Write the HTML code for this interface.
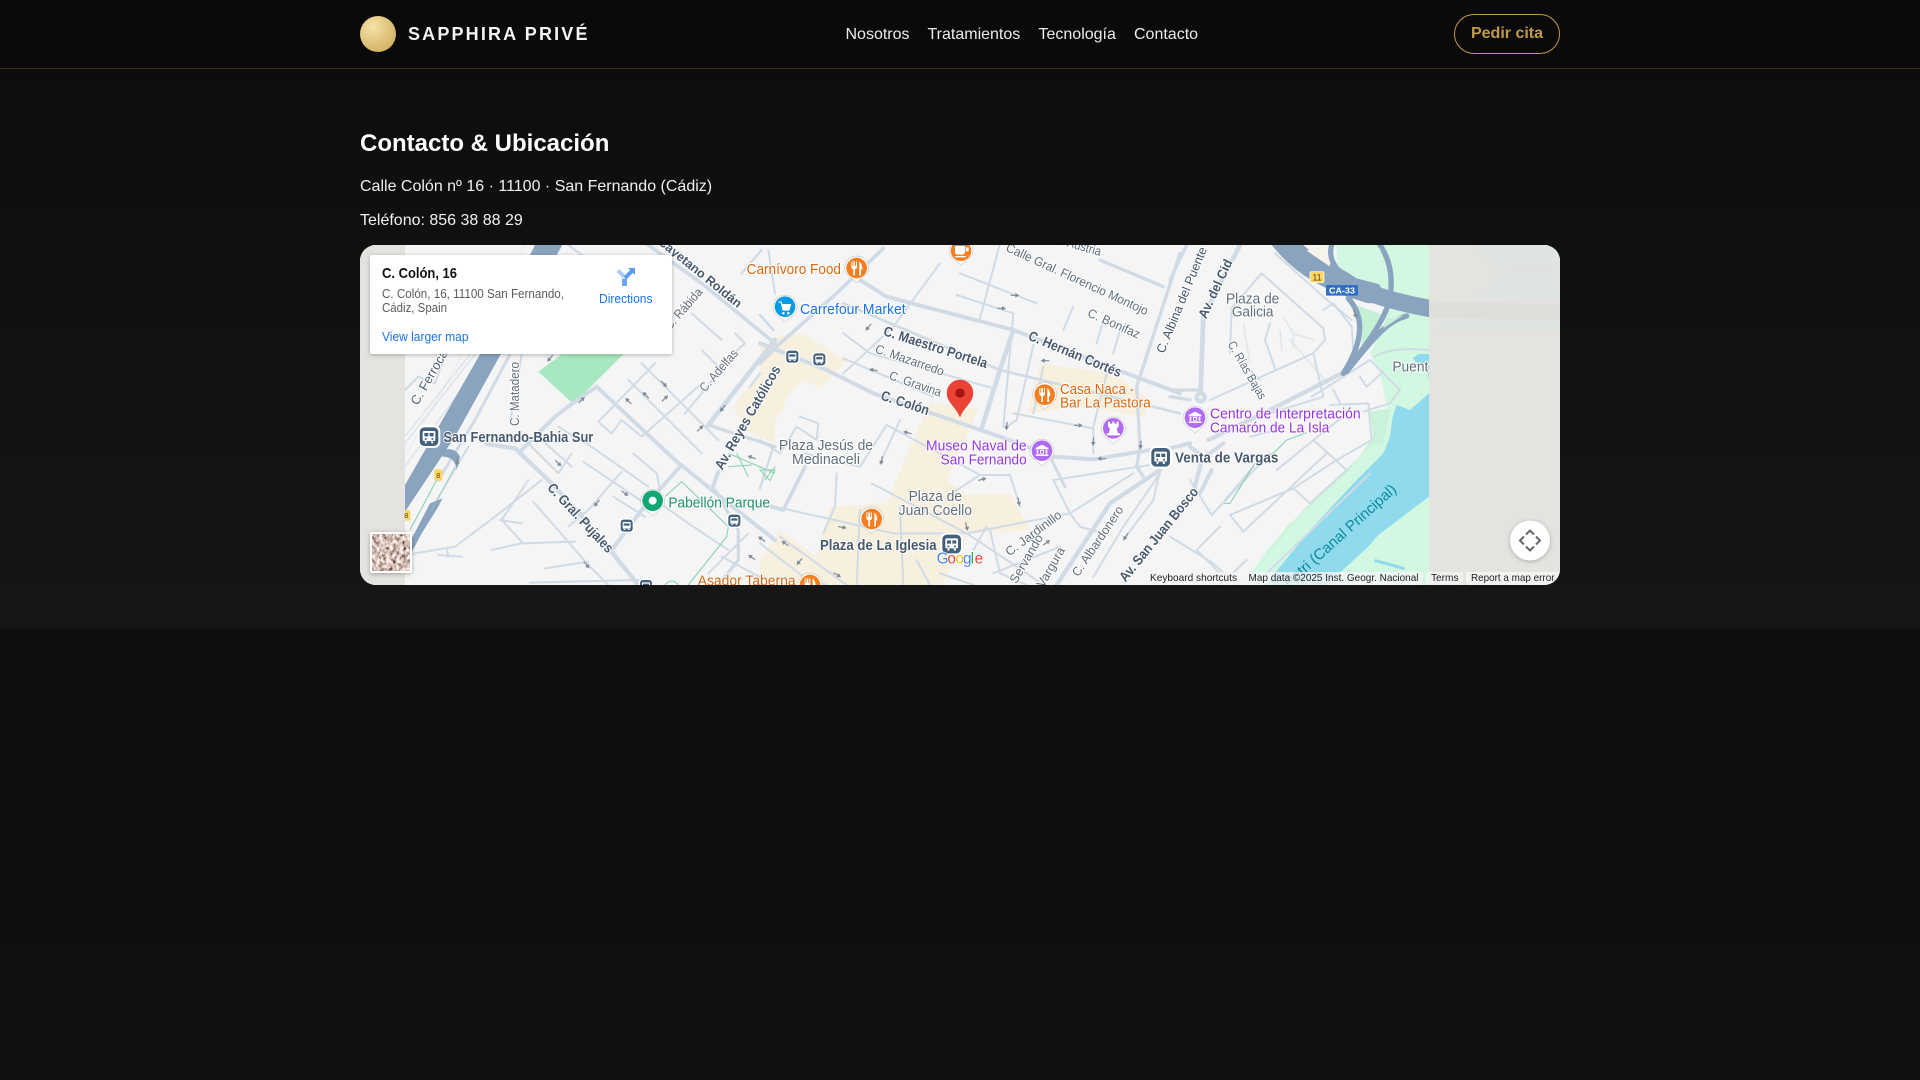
<!DOCTYPE html>
<html lang="es">
<head>
<meta charset="utf-8">
<title>Sapphira Privé</title>
<style>
*{box-sizing:border-box}
html,body{margin:0;padding:0;width:1920px;height:1080px;overflow:hidden;background:linear-gradient(#0a0a0a,#101010);font-family:"Liberation Sans",sans-serif;color:#f2f2f2}
header{position:absolute;left:0;top:0;width:1920px;height:69px;background:#0a0a0a;border-bottom:1px solid #3b2d18}
.logo{position:absolute;left:360px;top:16px;width:36px;height:36px;border-radius:50%;background:radial-gradient(circle at 35% 30%,#f6e3a8,#c9a24e)}
.brand{position:absolute;left:408px;top:23px;font-size:18px;line-height:22px;font-weight:700;letter-spacing:2.16px;color:#f4f4f4;white-space:nowrap}
.nav{position:absolute;top:25px;font-size:16px;line-height:20px;color:#ececec;white-space:nowrap}
.btn{position:absolute;left:1454px;top:14px;width:106px;height:40px;border:1px solid #c39a4a;border-radius:20px;color:#c39a4a;font-weight:700;font-size:16px;line-height:38px;text-align:center}
section{position:absolute;left:0;top:69px;width:1920px;height:560px;background:linear-gradient(#0d0d0d,#161616)}
h2{position:absolute;left:360px;top:128px;margin:0;font-size:24px;line-height:32px;font-weight:700;color:#fff;white-space:nowrap}
.p{position:absolute;left:360px;font-size:16px;line-height:20px;color:#f0f0f0;white-space:nowrap}
#map{position:absolute;left:360px;top:245px;width:1200px;height:340px;border-radius:16px;overflow:hidden;background:#f5f5f5}
#map svg{position:absolute;left:0;top:0;display:block}
text{font-family:"Liberation Sans",sans-serif}
.l text,text.l{paint-order:stroke;stroke:#fff;stroke-width:6;stroke-linejoin:round;font-size:45px}
.dk{fill:#47596e;font-weight:700}
.gy{fill:#5f6e7c}
.or{fill:#d9650f}
.pu{fill:#9334e6}
.bl{fill:#1a73e8}
.gr{fill:#1b9068}
.r1{fill:none;stroke:#d0dbe6;stroke-linecap:round;stroke-linejoin:round}
.hw{fill:none;stroke:#8aa4c0;stroke-linecap:round;stroke-linejoin:round}
.gl{fill:none;stroke:#7fd0ab;stroke-width:3}
</style>
</head>
<body>
<header>
<div class="logo"></div>
<div class="brand">SAPPHIRA PRIVÉ</div>
<div class="nav" style="left:845.5px">Nosotros</div>
<div class="nav" style="left:927.5px">Tratamientos</div>
<div class="nav" style="left:1038.5px">Tecnología</div>
<div class="nav" style="left:1134px">Contacto</div>
<div class="btn">Pedir cita</div>
</header>
<section></section>
<h2>Contacto &amp; Ubicación</h2>
<div class="p" style="top:177px">Calle Colón nº 16 · 11100 · San Fernando (Cádiz)</div>
<div class="p" style="top:211px">Teléfono: 856 38 88 29</div>
<div id="map">
<svg width="1200" height="340" viewBox="360 245 1200 340" xmlns="http://www.w3.org/2000/svg">
<defs>
<path id="a" d="M-13,-1.8L1,-1.8L1,-7L13,0L1,7L1,1.8L-13,1.8Z" fill="#7f8b97"/>
<g id="pin"><path d="M-36,2A36,36 0 1 1 36,2C36,22 16,30 0,46C-16,30 -36,22 -36,2Z" fill="#fff" stroke="#00000030" stroke-width="2"/></g>
<g id="fork"><path d="M-16,-20V-4Q-16,3 -10,4V22H-5V4Q1,3 1,-4V-20H-2V-6H-5V-20H-10V-6H-13V-20ZM8,-20Q17,-12 17,4H13V22H8Z" fill="#fff"/></g>
<g id="mus"><path d="M0,-18L19,-8V-4H-19V-8ZM-16,-2H-11V9H-16ZM11,-2H16V9H11ZM-6,-2H6V9H-6ZM-19,11H19V16H-19Z" fill="#fff"/><rect x="-3" y="1" width="6" height="6" fill="#b06bf0"/></g>
<g id="tr"><rect x="-34" y="-34" width="68" height="68" rx="18" fill="#fff"/><rect x="-28" y="-28" width="56" height="56" rx="14" fill="#43607c"/><path d="M-15,-17H15Q19,-17 19,-13V9Q19,13 15,13H-15Q-19,13 -19,9V-13Q-19,-17 -15,-17ZM-14,-11V-1H-2V-11ZM2,-11V-1H14V-11ZM-12,14H-5L-8,20H-13ZM5,14H12L13,20H8Z" fill="#fff"/><circle cx="-10" cy="7" r="3" fill="#43607c"/><circle cx="10" cy="7" r="3" fill="#43607c"/></g>
<g id="bs"><rect x="-22" y="-22" width="44" height="44" rx="12" fill="#fff"/><rect x="-18" y="-18" width="36" height="36" rx="9" fill="#43607c"/><path d="M-10,-11H10Q12,-11 12,-9V7Q12,9 10,9H-10Q-12,9 -12,7V-9Q-12,-11 -10,-11ZM-9,-7V0H9V-7ZM-9,10H-4V13H-9ZM4,10H9V13H4Z" fill="#fff"/></g>
<filter id="sat" x="0" y="0" width="100%" height="100%"><feTurbulence type="fractalNoise" baseFrequency="0.3 0.22" numOctaves="3" seed="7"/><feColorMatrix values="1.9 0 0 0 -.28  1.8 0 0 0 -.36  1.7 0 0 0 -.36  0 0 0 0 1"/></filter>
</defs>

<rect x="360" y="245" width="1200" height="340" fill="#f5f5f5"/>

<!-- CROP 5 base: greens and water -->
<g transform="translate(1170 240) scale(.33333)">
<path d="M500,15H777V1035H220L290,930L400,810L600,620L650,500L630,400L600,340L640,260L660,170L500,100Z" fill="#d3f8e2"/>
<path d="M545,190L640,225L575,320L575,270Z" fill="#c4f0d6"/>
<path d="M777,460L720,510L680,495L668,530L660,590L640,640L560,720L420,870L285,1035H777Z" fill="#90daee"/>
<path d="M777,770L625,885L595,920L470,1035H777Z" fill="#d3f8e2"/>
<path d="M777,342L745,342L728,355L745,372L770,375L777,420Z" fill="#90daee"/>
<path d="M617,962L700,985" stroke="#90daee" stroke-width="9" fill="none" stroke-linecap="round"/>
<path d="M400,810L600,620L640,610L660,505L600,515L610,590L540,690L350,860L250,1000Z" fill="#c9f2da"/>
</g>

<!-- CROP 4 base: tan -->
<g transform="translate(760 240) scale(.33333)" fill="#f8f0df">
<path d="M0,320L50,290L130,280L260,365L180,445L130,420L80,470L70,510L0,600Z"/>
<path d="M510,490L655,505L630,565L560,720L620,765L750,760L810,870L625,880L545,1035H0V960L60,870L170,950L210,800L380,790L450,620Z"/>
<path d="M840,370L1060,400L1170,480L1150,530L970,500L800,520Z"/>
</g>
<g transform="translate(355 240) scale(.33333)" fill="#f8f0df">
<path d="M1135,500L1260,335V610L1170,570Z"/>
</g>

<!-- CROP 3 roads -->
<g transform="translate(355 240) scale(.33333)">
<path d="M550,395L620,343H805L655,492Z" fill="#a8e8c0"/>
<g class="r1" stroke-width="4" opacity=".7"><path d="M360,343L150,610M345,343L150,590M395,343L150,680"/></g>
<g class="r1" stroke-width="6">
<path d="M500,343L465,550M340,620L240,790L195,880M150,450L190,410L240,430L270,343"/>
<path d="M735,550L770,580L800,540L860,590L1040,430M820,420L1040,640M860,370L1090,600M990,520L1140,340M1140,280L1170,310L1090,380L1040,330M1010,220L1100,300M730,545L900,370M1260,160L1240,30"/>
<path d="M520,610L610,700M560,600L650,680M610,560L690,610M650,640L610,700M685,665L870,790M695,610L880,740M835,640L905,700L915,750M800,695L700,810L640,860M775,770L870,830"/>
<path d="M535,785L700,975L760,1035M520,720L440,840L500,905M435,840L500,850M410,930L500,910L660,905M150,945L300,920L420,830L560,720M250,945L320,950M275,925L280,950M525,1028L850,1020M570,985L700,965M880,765L1000,850L1120,930M1100,950L1260,1035M1060,1000L1180,880"/>
</g>
<g class="r1">
<path stroke-width="9" d="M465,343L360,540L250,720"/>
<path stroke-width="11" d="M880,15L1040,130L1260,310"/>
<path stroke-width="14" d="M1260,300L1060,555"/>
<path stroke-width="10" d="M1060,555L1260,620"/>
<path stroke-width="12" d="M725,440L960,660L1120,790L1260,900"/>
<path stroke-width="12" d="M725,440L650,492L600,530L500,630"/>
<path stroke-width="13" d="M395,612L480,625L590,730L700,850L850,1035"/>
<path stroke-width="12" d="M975,680L860,810L770,930"/>
<path stroke-width="12" d="M1090,695L1070,750"/>
<path stroke-width="10" d="M1080,750L1150,870L1150,960L1090,1035"/>
<path stroke-width="7" d="M640,15L700,60M1220,30L1160,100"/>
</g>
<path class="gl" d="M980,725L930,770M980,725L1120,860L1115,890L1000,1035M245,720L165,870M930,1035Q950,1010 970,1035M1120,640L1260,700M1145,640L1180,710M1120,680L1190,675M1230,720L1260,680"/>
<path d="M540,15H622L437,343L300,590L150,815V735L375,343Z" fill="#8aa4c0"/>
<path d="M510,15L290,400L150,650" stroke="#cfdae5" stroke-width="2" fill="none" opacity=".5"/>
<path d="M262,630Q300,620 315,650L305,690Q300,650 262,650Z" fill="#8aa4c0"/>
<path d="M262,775L225,790L150,935V975L200,880L250,800Z" fill="#8aa4c0"/>
<path d="M300,680L230,810" stroke="#7fd0ab" stroke-width="2" fill="none"/>
<use href="#a" transform="translate(585,355) rotate(130)"/><use href="#a" transform="translate(680,480) rotate(-45)"/>
<use href="#a" transform="translate(927,432) rotate(45)"/><use href="#a" transform="translate(872,465) rotate(225)"/><use href="#a" transform="translate(930,475) rotate(-45)"/><use href="#a" transform="translate(820,483) rotate(225)"/><use href="#a" transform="translate(1103,505) rotate(130)"/><use href="#a" transform="translate(1036,565) rotate(-45)"/><use href="#a" transform="translate(1190,652) rotate(200)"/>
<use href="#a" transform="translate(610,670) rotate(45)"/><use href="#a" transform="translate(810,760) rotate(35)"/><use href="#a" transform="translate(725,790) rotate(130)"/><use href="#a" transform="translate(695,975) rotate(50)"/><use href="#a" transform="translate(1220,897) rotate(215)"/><use href="#a" transform="translate(1190,952) rotate(215)"/><use href="#a" transform="translate(307,665) rotate(90)"/>
</g>

<!-- CROP 4 roads -->
<g transform="translate(760 240) scale(.33333)">
<g class="r1" stroke-width="6">
<path d="M540,70L400,260L250,400M720,10L660,235M600,100L830,190L820,185M590,165L760,220L730,560M940,200L910,270M1030,240L1010,310M1080,270L1060,340"/>
<path d="M250,280L330,340L700,445M250,355L520,470M820,315L770,540L740,560M760,520L1000,565L1000,640M1000,560L1040,400M850,380L820,520"/>
<path d="M0,600L60,640L110,560L170,600L175,550L120,530M380,555L300,680L135,640M380,555L660,705L750,705L780,800M660,705L560,770M335,730L620,880M420,540L360,670M230,700L225,800L190,880M0,790L400,880L620,880L800,1000L850,1035M300,810L290,1035M420,800L430,1035M470,960L510,1035M540,1000L640,1035M690,870L720,1000L800,1035M620,880L930,820L960,860L1030,880M930,820L880,720L1200,670M930,820L1120,700M700,1000L900,920M1090,860L1000,1010M640,930L680,860"/>
<path d="M0,910L130,1010L200,1035M60,890L260,1035"/>
</g>
<g class="r1">
<path stroke-width="12" d="M300,120L380,170L760,270L1100,400L1260,460"/>
<path stroke-width="8" d="M250,190L720,390L1260,520M0,225L40,270"/>
<path stroke-width="12" d="M0,310L200,390L340,460L720,590L880,650L1000,658L1170,630"/>
<path stroke-width="11" d="M370,25L230,160L60,310L0,370"/>
<path stroke-width="14" d="M760,270L720,390L665,565"/>
<path stroke-width="10" d="M1260,40L1130,440L1140,620L1130,680L1150,710"/>
<path stroke-width="13" d="M1200,690L1050,790L890,1035"/>
<path stroke-width="6" d="M1200,700L1090,860M1200,690L1180,780L1090,900"/>
<path stroke-width="9" d="M875,660L915,740"/>
<path stroke-width="10" d="M1020,60L1210,140"/>
<path stroke-width="11" d="M135,680L70,810L0,790"/>
<path stroke-width="7" d="M0,745L40,620M0,400L-30,440"/>
</g>
<path class="gl" d="M0,690L45,690L30,722Z"/>
<use href="#a" transform="translate(325,262) rotate(130)"/><use href="#a" transform="translate(765,166) rotate(0)"/><use href="#a" transform="translate(725,205) rotate(0)"/><use href="#a" transform="translate(855,362) rotate(180)"/><use href="#a" transform="translate(340,390) rotate(190)"/><use href="#a" transform="translate(740,558) rotate(95)"/><use href="#a" transform="translate(955,556) rotate(0)"/><use href="#a" transform="translate(1000,605) rotate(95)"/><use href="#a" transform="translate(1142,615) rotate(95)"/><use href="#a" transform="translate(1025,656) rotate(180)"/><use href="#a" transform="translate(442,578) rotate(195)"/><use href="#a" transform="translate(365,662) rotate(100)"/><use href="#a" transform="translate(667,718) rotate(-15)"/><use href="#a" transform="translate(776,785) rotate(80)"/><use href="#a" transform="translate(620,860) rotate(75)"/><use href="#a" transform="translate(247,862) rotate(10)"/><use href="#a" transform="translate(75,910) rotate(215)"/><use href="#a" transform="translate(118,965) rotate(130)"/><use href="#a" transform="translate(232,1005) rotate(30)"/><use href="#a" transform="translate(860,908) rotate(-35)"/><use href="#a" transform="translate(1097,890) rotate(125)"/>
</g>

<!-- CROP 5 roads -->
<g transform="translate(1170 240) scale(.33333)">
<g class="r1" stroke-width="6">
<path d="M315,40L460,170L545,240M275,100L460,265L465,300L430,340L120,480M275,100L185,205L180,340M460,210L490,190L545,260L550,330M300,250L285,300L315,385M220,370L270,420M430,340L460,470L300,520M425,470L600,360L640,400L690,450L660,490L580,515M615,350Q660,320 777,330M570,410L590,440L640,395M490,450L510,490M480,495L595,490L605,600L500,660L370,745L180,825L220,875L470,640M430,600L530,690L420,790M320,690L530,520M370,745L420,790M60,720L125,825L300,640M150,860L80,930L150,1000M0,890L130,970L200,1035M290,1000L600,700M150,1035L230,960"/>
</g>
<g class="r1" stroke-width="4" opacity=".65"><path d="M340,230L370,280L430,300M370,280L370,320M330,270L335,330M220,250L240,370M490,450L360,300"/></g>
<g class="r1">
<path stroke-width="14" d="M210,15L100,230L92,450"/>
<path stroke-width="13" d="M515,400L280,520L115,600"/>
<path stroke-width="10" d="M50,15L0,120M92,450L0,450M60,480L0,470"/>
<path stroke-width="12" d="M60,620L100,650L120,640L160,610M95,660L70,760M125,690L90,760M0,625L60,610"/>
<circle cx="92" cy="472" r="12" fill="#f5f5f5" stroke-width="13"/>
<path stroke-width="6" d="M320,570L240,590M250,680L165,780"/>
</g>
<path class="gl" d="M410,578L350,600L310,640L255,670L180,790H163"/>
<path class="hw" stroke-width="70" d="M330,-10C400,80 480,120 600,155"/>
<path class="hw" stroke-width="52" d="M600,160C660,180 720,195 777,205"/>
<path class="hw" stroke-width="16" d="M485,15C475,50 490,85 525,105M630,15C660,60 670,110 660,170C650,240 570,340 520,400M535,175C575,220 590,290 520,400M710,228C660,240 620,280 530,395"/>
<path d="M410,32L470,15L480,80Z" fill="#f7f3ea"/>
<path d="M500,30L630,25L655,140L560,115L505,80Z" fill="#d3f8e2"/>
<path d="M640,265L700,225L648,238Z" fill="#c4f0d6"/>
<use href="#a" transform="translate(555,222) rotate(70)"/>
<path d="M777,15H1170V1035H777Z" fill="#e5e3df"/>
</g>

<!-- overlays gray -->
<rect x="360" y="245" width="45" height="340" fill="#e5e3df"/>
<g transform="translate(1380 240) scale(.33333)">
<path d="M270,15L335,75L345,95L320,150L270,180L540,185V15Z" fill="#dfe3e2"/>
<path d="M190,240L175,275H540V240Z" fill="#dfe3e2"/>
<path d="M148,183L540,190V243L148,232Z" fill="#dfdedb"/>
<text x="380" y="92" font-size="40" fill="#e4dce0" textLength="150" lengthAdjust="spacingAndGlyphs">Baluarte</text>
</g>

<!-- LABELS crop3 -->
<g class="l" transform="translate(355 240) scale(.33333)">
<text class="gy" transform="translate(188,498) rotate(-60)" style="font-size:39px;fill:#4d5f72">C. Ferrocarril</text>
<text class="gy" transform="translate(492,558) rotate(-90)" style="font-size:39px" textLength="192" lengthAdjust="spacingAndGlyphs">C. Matadero</text>
<text class="dk" x="265" y="606" textLength="450" lengthAdjust="spacingAndGlyphs" style="stroke-width:5">San Fernando-Bahia Sur</text>
<text class="dk" transform="translate(575,745) rotate(47)" textLength="268" lengthAdjust="spacingAndGlyphs" style="font-size:42px">C. Gral. Pujales</text>
<text class="gr" x="940" y="802" textLength="305" lengthAdjust="spacingAndGlyphs">Pabellón Parque</text>
<text class="or" x="1028" y="1036" textLength="294" lengthAdjust="spacingAndGlyphs">Asador Taberna</text>
<text class="gy" transform="translate(1050,458) rotate(-49)" style="font-size:38px" textLength="155" lengthAdjust="spacingAndGlyphs">C. Adelfas</text>
<text class="gy" transform="translate(945,272) rotate(-49)" style="font-size:38px" textLength="152" lengthAdjust="spacingAndGlyphs">C. Rábida</text>
<text class="dk" transform="translate(1148,205) rotate(39)" text-anchor="end" style="font-size:38px">Cayetano Roldán</text>
<text class="dk" transform="translate(1102,692) rotate(-60)" textLength="352" lengthAdjust="spacingAndGlyphs" style="font-size:42px">Av. Reyes Católicos</text>
<text class="or" x="1175" y="102" textLength="283" lengthAdjust="spacingAndGlyphs">Carnívoro Food</text>
</g>
<!-- LABELS crop4 -->
<g class="l" transform="translate(760 240) scale(.33333)">
<text class="bl" x="120" y="222" textLength="317" lengthAdjust="spacingAndGlyphs">Carrefour Market</text>
<text class="dk" transform="translate(368,285) rotate(17.8)" textLength="325" lengthAdjust="spacingAndGlyphs" style="font-size:42px">C. Maestro Portela</text>
<text class="gy" transform="translate(343,337) rotate(19)" textLength="216" lengthAdjust="spacingAndGlyphs" style="font-size:38px">C. Mazarredo</text>
<text class="gy" transform="translate(385,417) rotate(19)" textLength="163" lengthAdjust="spacingAndGlyphs" style="font-size:38px">C. Gravina</text>
<text class="dk" transform="translate(360,478) rotate(18.5)" textLength="150" lengthAdjust="spacingAndGlyphs" style="font-size:42px">C. Colón</text>
<text class="dk" transform="translate(802,298) rotate(22.5)" textLength="298" lengthAdjust="spacingAndGlyphs" style="font-size:42px">C. Hernán Cortés</text>
<text class="gy" transform="translate(735,32) rotate(24.7)" textLength="465" lengthAdjust="spacingAndGlyphs" style="font-size:38px">Calle Gral. Florencio Montojo</text>
<text class="gy" transform="translate(980,228) rotate(24)" textLength="168" lengthAdjust="spacingAndGlyphs" style="font-size:38px">C. Bonifaz</text>
<text class="gy" transform="translate(880,8) rotate(16)" textLength="145" lengthAdjust="spacingAndGlyphs" style="font-size:39px">C. Austria</text>
<text class="gy" transform="translate(1212,342) rotate(-67.6)" textLength="340" lengthAdjust="spacingAndGlyphs" style="font-size:38px;fill:#43566a">C. Albina del Puente</text>
<text class="gy" x="198" y="630" text-anchor="middle" textLength="282" lengthAdjust="spacingAndGlyphs">Plaza Jesús de</text>
<text class="gy" x="198" y="672" text-anchor="middle" textLength="204" lengthAdjust="spacingAndGlyphs">Medinaceli</text>
<text class="pu" x="800" y="632" text-anchor="end" textLength="302" lengthAdjust="spacingAndGlyphs">Museo Naval de</text>
<text class="pu" x="800" y="674" text-anchor="end" textLength="258" lengthAdjust="spacingAndGlyphs">San Fernando</text>
<text class="or" x="900" y="462" textLength="222" lengthAdjust="spacingAndGlyphs">Casa Naca -</text>
<text class="or" x="900" y="503" textLength="272" lengthAdjust="spacingAndGlyphs">Bar La Pastora</text>
<text class="gy" x="526" y="783" text-anchor="middle" textLength="160" lengthAdjust="spacingAndGlyphs">Plaza de</text>
<text class="gy" x="526" y="825" text-anchor="middle" textLength="220" lengthAdjust="spacingAndGlyphs">Juan Coello</text>
<text class="dk" x="180" y="930" textLength="350" lengthAdjust="spacingAndGlyphs">Plaza de La Iglesia</text>
<text class="dk" transform="translate(1097,1028) rotate(-51)" textLength="350" lengthAdjust="spacingAndGlyphs" style="font-size:42px">Av. San Juan Bosco</text>
<text class="gy" transform="translate(955,1012) rotate(-56)" textLength="245" lengthAdjust="spacingAndGlyphs" style="font-size:38px">C. Albardonero</text>
<text class="gy" transform="translate(748,950) rotate(-37)" textLength="200" lengthAdjust="spacingAndGlyphs" style="font-size:38px">C. Jardinillo</text>
<text class="gy" transform="translate(745,1075) rotate(-60)" style="font-size:38px">C. Servando</text>
<text class="gy" transform="translate(850,1045) rotate(-60)" style="font-size:38px">Vargura</text>
</g>
<!-- LABELS crop5 -->
<g class="l" transform="translate(1170 240) scale(.33333)">
<text class="dk" transform="translate(108,238) rotate(-65)" textLength="190" lengthAdjust="spacingAndGlyphs" style="font-size:40px">Av. del Cid</text>
<text class="gy" x="248" y="190" text-anchor="middle" textLength="160" lengthAdjust="spacingAndGlyphs">Plaza de</text>
<text class="gy" x="248" y="230" text-anchor="middle" textLength="125" lengthAdjust="spacingAndGlyphs">Galicia</text>
<text class="gy" transform="translate(172,312) rotate(60)" textLength="195" lengthAdjust="spacingAndGlyphs" style="font-size:37px">C. Rías Bajas</text>
<text class="gy" x="667" y="395" textLength="108" lengthAdjust="spacingAndGlyphs">Puent</text>
<text class="pu" x="120" y="535" textLength="452" lengthAdjust="spacingAndGlyphs">Centro de Interpretación</text>
<text class="pu" x="120" y="577" textLength="358" lengthAdjust="spacingAndGlyphs">Camarón de La Isla</text>
<text class="dk" x="15" y="667" textLength="310" lengthAdjust="spacingAndGlyphs">Venta de Vargas</text>
</g>
<g transform="translate(1170 240) scale(.33333)">
<text transform="translate(682,752) rotate(-42)" text-anchor="end" font-size="45" fill="#0b8a9e" stroke="#90daee" stroke-width="3" paint-order="stroke">Sancti Petri (Canal Principal)</text>
<rect x="420" y="95" width="42" height="33" rx="4" fill="#fdd663" stroke="#fff" stroke-width="2"/>
<text x="441" y="121" font-size="27" text-anchor="middle" fill="#5a4a10">11</text>
<rect x="468" y="135" width="96" height="32" rx="3" fill="#2f6fc4"/>
<text x="516" y="160" font-size="26" font-weight="700" text-anchor="middle" fill="#fff" textLength="78" lengthAdjust="spacingAndGlyphs">CA-33</text>
</g>

<!-- PINS & transit -->
<g transform="translate(760 240) scale(.33333)">
<use href="#pin" transform="translate(290,82)"/><circle cx="290" cy="84" r="31" fill="#f57f20"/><use href="#fork" transform="translate(290,84)"/>
<use href="#pin" transform="translate(603,30)"/><circle cx="603" cy="32" r="31" fill="#f57f20"/><path d="M585,18H615V36Q615,44 605,44H595Q585,44 585,36ZM617,22H626V34H617ZM585,48H618V52H585Z" fill="#fff"/>
<use href="#pin" transform="translate(75,200)"/><circle cx="75" cy="200" r="31" fill="#039be5"/><path d="M56,184H64L67,192H94L88,212H68L62,188H56ZM70,216A4,4 0 1 0 70.1,216ZM85,216A4,4 0 1 0 85.1,216Z" fill="#fff"/>
<use href="#pin" transform="translate(854,462)"/><circle cx="854" cy="464" r="31" fill="#f57f20"/><use href="#fork" transform="translate(854,464)"/>
<use href="#pin" transform="translate(1060,565)"/><circle cx="1060" cy="565" r="31" fill="#b06bf0"/><path d="M1044,545H1050V551H1057V545H1063V551H1070V545H1076V560L1070,566L1074,580H1080V586H1040V580H1046L1050,566L1044,560Z" fill="#fff"/>
<use href="#pin" transform="translate(846,632)"/><circle cx="846" cy="632" r="31" fill="#b06bf0"/><use href="#mus" transform="translate(846,632)"/>
<use href="#pin" transform="translate(335,835)"/><circle cx="335" cy="837" r="31" fill="#f57f20"/><use href="#fork" transform="translate(335,837)"/>
<use href="#pin" transform="translate(150,1033)"/><circle cx="150" cy="1035" r="31" fill="#f57f20"/><use href="#fork" transform="translate(150,1035)"/>
<use href="#bs" transform="translate(97,350)"/><use href="#bs" transform="translate(178,358)"/>
<use href="#tr" transform="translate(575,912)"/><use href="#tr" transform="translate(1202,652)"/>
</g>
<g transform="translate(355 240) scale(.33333)">
<use href="#tr" transform="translate(222,590)"/>
<use href="#bs" transform="translate(815,857)"/><use href="#bs" transform="translate(1138,842)"/><use href="#bs" transform="translate(873,1038)"/>
<use href="#pin" transform="translate(893,782)"/><circle cx="893" cy="782" r="31" fill="#12a673"/><circle cx="893" cy="782" r="12" fill="#fff"/>
<rect x="238" y="688" width="24" height="34" rx="3" fill="#fdd663"/><text x="250" y="714" font-size="22" text-anchor="middle" fill="#5a4a10">8</text>
<rect x="150" y="810" width="16" height="32" rx="3" fill="#fdd663"/><text x="154" y="834" font-size="22" text-anchor="middle" fill="#5a4a10">8</text>
</g>
<g transform="translate(1170 240) scale(.33333)">
<use href="#pin" transform="translate(75,533)"/><circle cx="75" cy="533" r="31" fill="#b06bf0"/><use href="#mus" transform="translate(75,533)"/>
</g>

<!-- Red marker -->
<g transform="translate(760 240) scale(.33333)">
<path d="M600,420C577,420 561,438 561,459C561,488 588,500 600,531C612,500 639,488 639,459C639,438 623,420 600,420Z" fill="#ea4335" stroke="#c5221f" stroke-width="1"/>
<circle cx="600" cy="459" r="14" fill="#a5140f"/>
<g font-size="46" style="paint-order:stroke;stroke:#fff;stroke-width:5;stroke-linejoin:round">
<text x="530" y="970" fill="#4285f4">G</text><text x="562" y="970" fill="#ea4335">o</text><text x="586" y="970" fill="#fbbc04">o</text><text x="609" y="970" fill="#4285f4">g</text><text x="632" y="970" fill="#34a853">l</text><text x="644" y="970" fill="#ea4335">e</text>
</g>
</g>

<!-- Footer attribution -->
<rect x="1147" y="572" width="91" height="13" fill="#f5f5f5" fill-opacity=".72"/>
<rect x="1243" y="572" width="180" height="13" fill="#f5f5f5" fill-opacity=".78"/>
<rect x="1426" y="572" width="37" height="13" fill="#f5f5f5" fill-opacity=".78"/>
<rect x="1466" y="572" width="94" height="13" fill="#f5f5f5" fill-opacity=".82"/>
<g font-size="10.500" fill="#222">
<text x="1150" y="581" textLength="87" lengthAdjust="spacingAndGlyphs">Keyboard shortcuts</text>
<text x="1248.5" y="581" textLength="170" lengthAdjust="spacingAndGlyphs">Map data ©2025 Inst. Geogr. Nacional</text>
<text x="1431" y="581" textLength="27.5" lengthAdjust="spacingAndGlyphs">Terms</text>
<text x="1471" y="581" textLength="83.5" lengthAdjust="spacingAndGlyphs">Report a map error</text>
</g>

<!-- Fullscreen -->
<circle cx="1530" cy="540.5" r="20" fill="#fff" style="filter:drop-shadow(0 1px 2px rgba(0,0,0,.25))"/>
<g transform="translate(1530 540.5)" fill="none" stroke="#666" stroke-width="2">
<path d="M-4,-6L0,-10L4,-6"/>
<path d="M-4,6L0,10L4,6"/>
<path d="M-6,-4L-10,0L-6,4"/>
<path d="M6,-4L10,0L6,4"/>
</g>

<!-- Satellite thumb -->
<rect x="370" y="532" width="42" height="41" rx="1.5" fill="#fff" style="filter:drop-shadow(0 1px 2px rgba(0,0,0,.3))"/>
<rect x="372" y="534" width="38" height="37" fill="#b8a090"/>
<rect x="372" y="534" width="38" height="37" filter="url(#sat)"/>

<!-- Info card -->
<rect x="370" y="255" width="302" height="99" rx="2" fill="#fff" style="filter:drop-shadow(0 1px 2px rgba(0,0,0,.28))"/>
<text x="382" y="278" font-size="15" font-weight="700" fill="#111" textLength="75" lengthAdjust="spacingAndGlyphs">C. Colón, 16</text>
<text x="382" y="298" font-size="13" fill="#5b5b5b" textLength="182" lengthAdjust="spacingAndGlyphs">C. Colón, 16, 11100 San Fernando,</text>
<text x="382" y="312" font-size="13" fill="#5b5b5b" textLength="65" lengthAdjust="spacingAndGlyphs">Cádiz, Spain</text>
<text x="382" y="341" font-size="13" fill="#1a73e8" textLength="86.500" lengthAdjust="spacingAndGlyphs">View larger map</text>
<text x="599" y="303" font-size="13" fill="#1a73e8" textLength="53.500" lengthAdjust="spacingAndGlyphs">Directions</text>
<path d="M618,270.5L624,276.5" stroke="#a9c9f8" stroke-width="4" fill="none"/>
<path d="M624.500,286V278.500" stroke="#6ea6f5" stroke-width="5" fill="none"/>
<path d="M625,278L632,271" stroke="#5b9bf3" stroke-width="4" fill="none"/>
<path d="M628,268H635V275Z" fill="#5b9bf3"/>
</svg>
</div>
</body>
</html>
